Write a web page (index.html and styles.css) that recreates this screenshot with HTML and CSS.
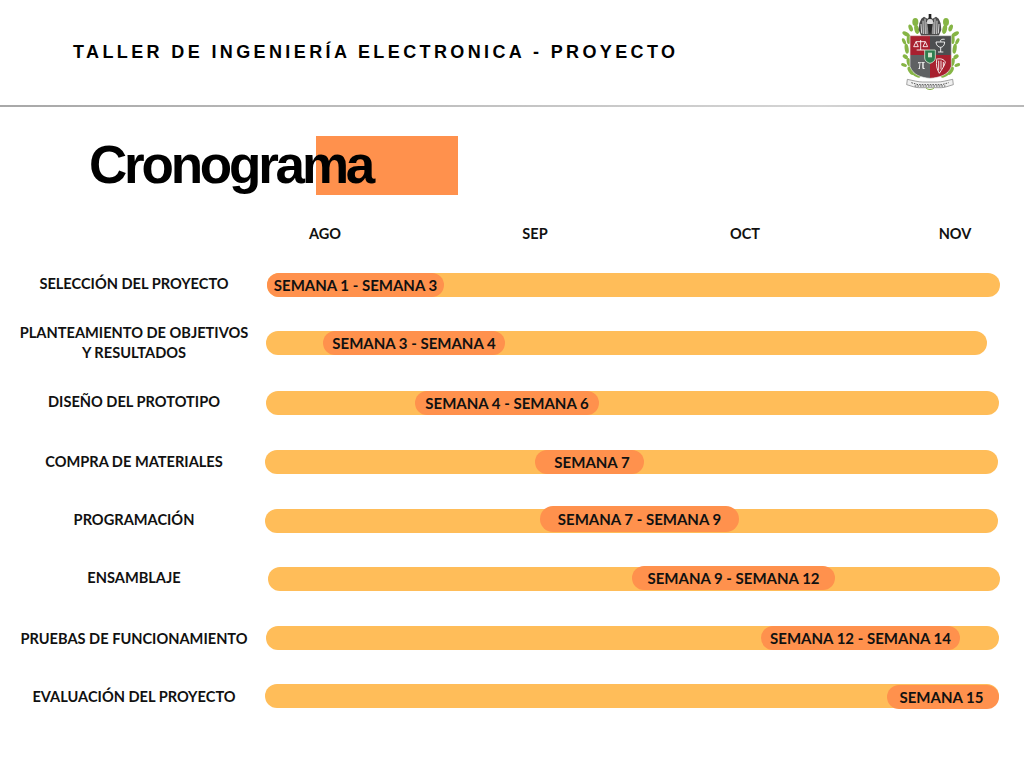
FILE: index.html
```html
<!DOCTYPE html>
<html lang="es">
<head>
<meta charset="utf-8">
<title>Cronograma</title>
<link rel="stylesheet" href="styles.css">
</head>
<body>
<div class="slide">
  <header class="header">
    <h2 class="course">TALLER DE INGENIERÍA ELECTRONICA - PROYECTO</h2>
    <svg class="crest" viewBox="63 42 177 231" aria-label="Escudo">
      <defs>
        <g id="leaves" fill="#86b545">
          <ellipse cx="106" cy="66" rx="9" ry="12"/>
          <ellipse cx="110" cy="88" rx="7" ry="14" transform="rotate(-12 110 88)"/>
          <ellipse cx="92" cy="84" rx="6" ry="11" transform="rotate(-20 92 84)"/>
          <ellipse cx="78" cy="102" rx="12" ry="6" transform="rotate(30 78 102)"/>
          <ellipse cx="86" cy="118" rx="6" ry="14"/>
          <ellipse cx="72" cy="124" rx="5" ry="10" transform="rotate(-25 72 124)"/>
          <ellipse cx="80" cy="146" rx="6" ry="15" transform="rotate(-8 80 146)"/>
          <ellipse cx="76" cy="170" rx="9" ry="6" transform="rotate(35 76 170)"/>
          <ellipse cx="72" cy="195" rx="9" ry="5" transform="rotate(20 72 195)"/>
          <ellipse cx="86" cy="186" rx="6" ry="12" transform="rotate(-10 86 186)"/>
          <ellipse cx="92" cy="212" rx="7" ry="14" transform="rotate(-30 92 212)"/>
          <ellipse cx="110" cy="226" rx="12" ry="5" transform="rotate(25 110 226)"/>
        </g>
      </defs>
      <use href="#leaves"/>
      <use href="#leaves" transform="matrix(-1 0 0 1 304 0)"/>
      <path d="M150 50l8 6 10-6 8 6 6 14 2 20-8 18h-52l-8-18 2-20 6-14 8-6 10 6z" fill="#4b4b4b"/>
      <g stroke="#efefef" stroke-width="2.6" fill="none">
        <path d="M123 72l2 28M129 62l1 40M135 56l1 46M141 66v36M159 66v36M165 56l-1 46M171 62l-1 40M177 72l-2 28"/>
      </g>
      <path d="M146 42h8v14h-8z" fill="#222"/>
      <ellipse cx="150" cy="66" rx="9" ry="9" fill="#dcdcdc"/>
      <path d="M142 72h16l-3 18-5 14-5-14z" fill="#2a2a2a"/>
      <path d="M90 107h60v58H90z" fill="#a8202f"/>
      <path d="M150 107h64v58h-64z" fill="#4c4e50"/>
      <path d="M90 165h60v70c-26-2-52-10-60-36z" fill="#5f6163"/>
      <path d="M150 165h64v34c-8 26-36 34-64 36z" fill="#a8202f"/>
      <path d="M90 107h124v92c-8 26-36 34-64 36-26-2-52-10-60-36z" fill="none" stroke="#e6e6e6" stroke-width="2"/>
      <g fill="none" stroke="#fff" stroke-width="2.6">
        <path d="M122 120v30M110 150h24M108 125h28M108 125l-7 15h14zM136 125l-7 15h14z"/>
        <path d="M168 126c0 10 8 16 14 16s12-6 12-16zM182 142v14M174 156h16"/>
        <path d="M194 118c-10-2-16 4-10 8"/>
        <path d="M168 178c14-4 24 0 28 8-2 12-12 24-18 34M170 180c-2 14 0 28 8 40M176 182v30M183 182v26M190 186v14"/>
      </g>
      <text class="pi" x="124" y="208" text-anchor="middle">π</text>
      <path d="M134 150h32v24c0 8-8 14-16 16-8-2-16-8-16-16z" fill="#2e7d4f" stroke="#d8e6d2" stroke-width="2.5"/>
      <path d="M144 158h12v14h-12z" fill="#cfe0c8"/>
      <path d="M82 238c20 4 32 8 46 8h44c14 0 26-4 46-8l2 16c-14 4-26 9-36 9h-68c-10 0-22-5-36-9z" fill="#f0f0f0" stroke="#777" stroke-width="2"/>
      <path d="M94 248l20 6h72l20-6M104 258h92" stroke="#555" stroke-width="3" stroke-dasharray="5 3" fill="none"/>
      <path d="M138 264c6 6 18 6 24 0" fill="none" stroke="#86b545" stroke-width="3"/>
    </svg>
  </header>
  <div class="rule"></div>
  <main class="content">
    <div class="title-box">
      <span class="title-mark"></span>
      <h1 class="title">Cronograma</h1>
    </div>
    <div class="months">
      <span class="month">AGO</span>
      <span class="month">SEP</span>
      <span class="month">OCT</span>
      <span class="month">NOV</span>
    </div>
    <div class="rows">
      <div class="row"><div class="label label-up">SELECCIÓN DEL PROYECTO</div><div class="track" style="margin-left:2px;width:733px"><span class="pill" style="left:0;width:177px">SEMANA 1 - SEMANA 3</span></div></div>
      <div class="row"><div class="label">PLANTEAMIENTO DE OBJETIVOS<br>Y RESULTADOS</div><div class="track" style="margin-left:1px;width:721px"><span class="pill" style="left:57px;width:182px">SEMANA 3 - SEMANA 4</span></div></div>
      <div class="row"><div class="label label-up">DISEÑO DEL PROTOTIPO</div><div class="track" style="margin-left:1px;width:733px"><span class="pill" style="left:149px;width:184px">SEMANA 4 - SEMANA 6</span></div></div>
      <div class="row"><div class="label">COMPRA DE MATERIALES</div><div class="track" style="margin-left:0;width:733px"><span class="pill" style="left:270px;width:109px;padding-left:5px">SEMANA 7</span></div></div>
      <div class="row"><div class="label label-up">PROGRAMACIÓN</div><div class="track" style="margin-left:0;width:733px"><span class="pill pill-tall" style="left:275px;width:199px">SEMANA 7 - SEMANA 9</span></div></div>
      <div class="row"><div class="label label-up">ENSAMBLAJE</div><div class="track" style="margin-left:3px;width:732px"><span class="pill" style="left:364px;width:203px;top:-1px">SEMANA 9 - SEMANA 12</span></div></div>
      <div class="row"><div class="label label-down">PRUEBAS DE FUNCIONAMIENTO</div><div class="track" style="margin-left:1px;width:733px"><span class="pill" style="left:495px;width:199px">SEMANA 12 - SEMANA 14</span></div></div>
      <div class="row"><div class="label label-down">EVALUACIÓN DEL PROYECTO</div><div class="track" style="margin-left:0;width:734px"><span class="pill" style="left:622px;width:112px;top:1px;padding-right:3px">SEMANA 15</span></div></div>
    </div>
  </main>
</div>
</body>
</html>
```
FILE: styles.css
```css
* { box-sizing: border-box; }
html, body { margin: 0; padding: 0; background: #fff; }
.slide {
  width: 1024px;
  height: 768px;
  overflow: hidden;
  color: #111;
  font-family: "Lato", "Liberation Sans", sans-serif;
}
.header {
  height: 105px;
  padding: 14px 64px 0 73px;
  display: flex;
  justify-content: space-between;
  align-items: flex-start;
}
.course {
  margin: 27px 0 0;
  font: 700 18px/22px "Liberation Sans", sans-serif;
  letter-spacing: 3.38px;
  color: #000;
}
.crest { width: 59px; height: 77px; filter: blur(0.4px); }
.pi { font: 400 44px "Liberation Serif", serif; fill: #fff; }
.rule {
  height: 2px;
  background: linear-gradient(90deg, #a8a8a8, #c4c4c4 50%, #d4d4d4 80%, #b8b8b8);
}
.content { padding-top: 29px; }
.title-box { position: relative; height: 59px; margin-left: 89px; }
.title-mark {
  position: absolute;
  left: 227px;
  top: 0;
  width: 142px;
  height: 59px;
  background: #ff914d;
}
.title {
  position: relative;
  margin: 0;
  font: 700 53px/57px "Liberation Sans", sans-serif;
  letter-spacing: -3.2px;
  color: #000;
}
.months {
  display: flex;
  margin: 29px 0 0 220px;
}
.month {
  flex: none;
  width: 210px;
  text-align: center;
  font-size: 14.5px;
  font-weight: 700;
  line-height: 20px;
}
.rows {
  display: grid;
  margin-top: 29px;
  grid-template-rows: 58px 60px 59px 59px 58px 59px 58px 24px;
}
.row {
  display: grid;
  grid-template-columns: 265px 1fr;
  grid-template-rows: 24px;
  align-items: center;
  height: 24px;
}
.label {
  width: 268px;
  text-align: center;
  font-size: 14.6px;
  font-weight: 700;
  line-height: 20px;
}
.label-up { padding-bottom: 2px; }
.label-down { padding-top: 2px; }
.track {
  position: relative;
  height: 24px;
  border-radius: 12px;
  background: #ffbd59;
}
.pill {
  position: absolute;
  top: 0;
  height: 24px;
  border-radius: 12px;
  background: #ff914d;
  text-align: center;
  font-size: 15px;
  font-weight: 700;
  line-height: 24px;
  white-space: nowrap;
}
.pill-tall {
  top: -3px;
  height: 26px;
  border-radius: 13px;
  line-height: 26px;
}
```
